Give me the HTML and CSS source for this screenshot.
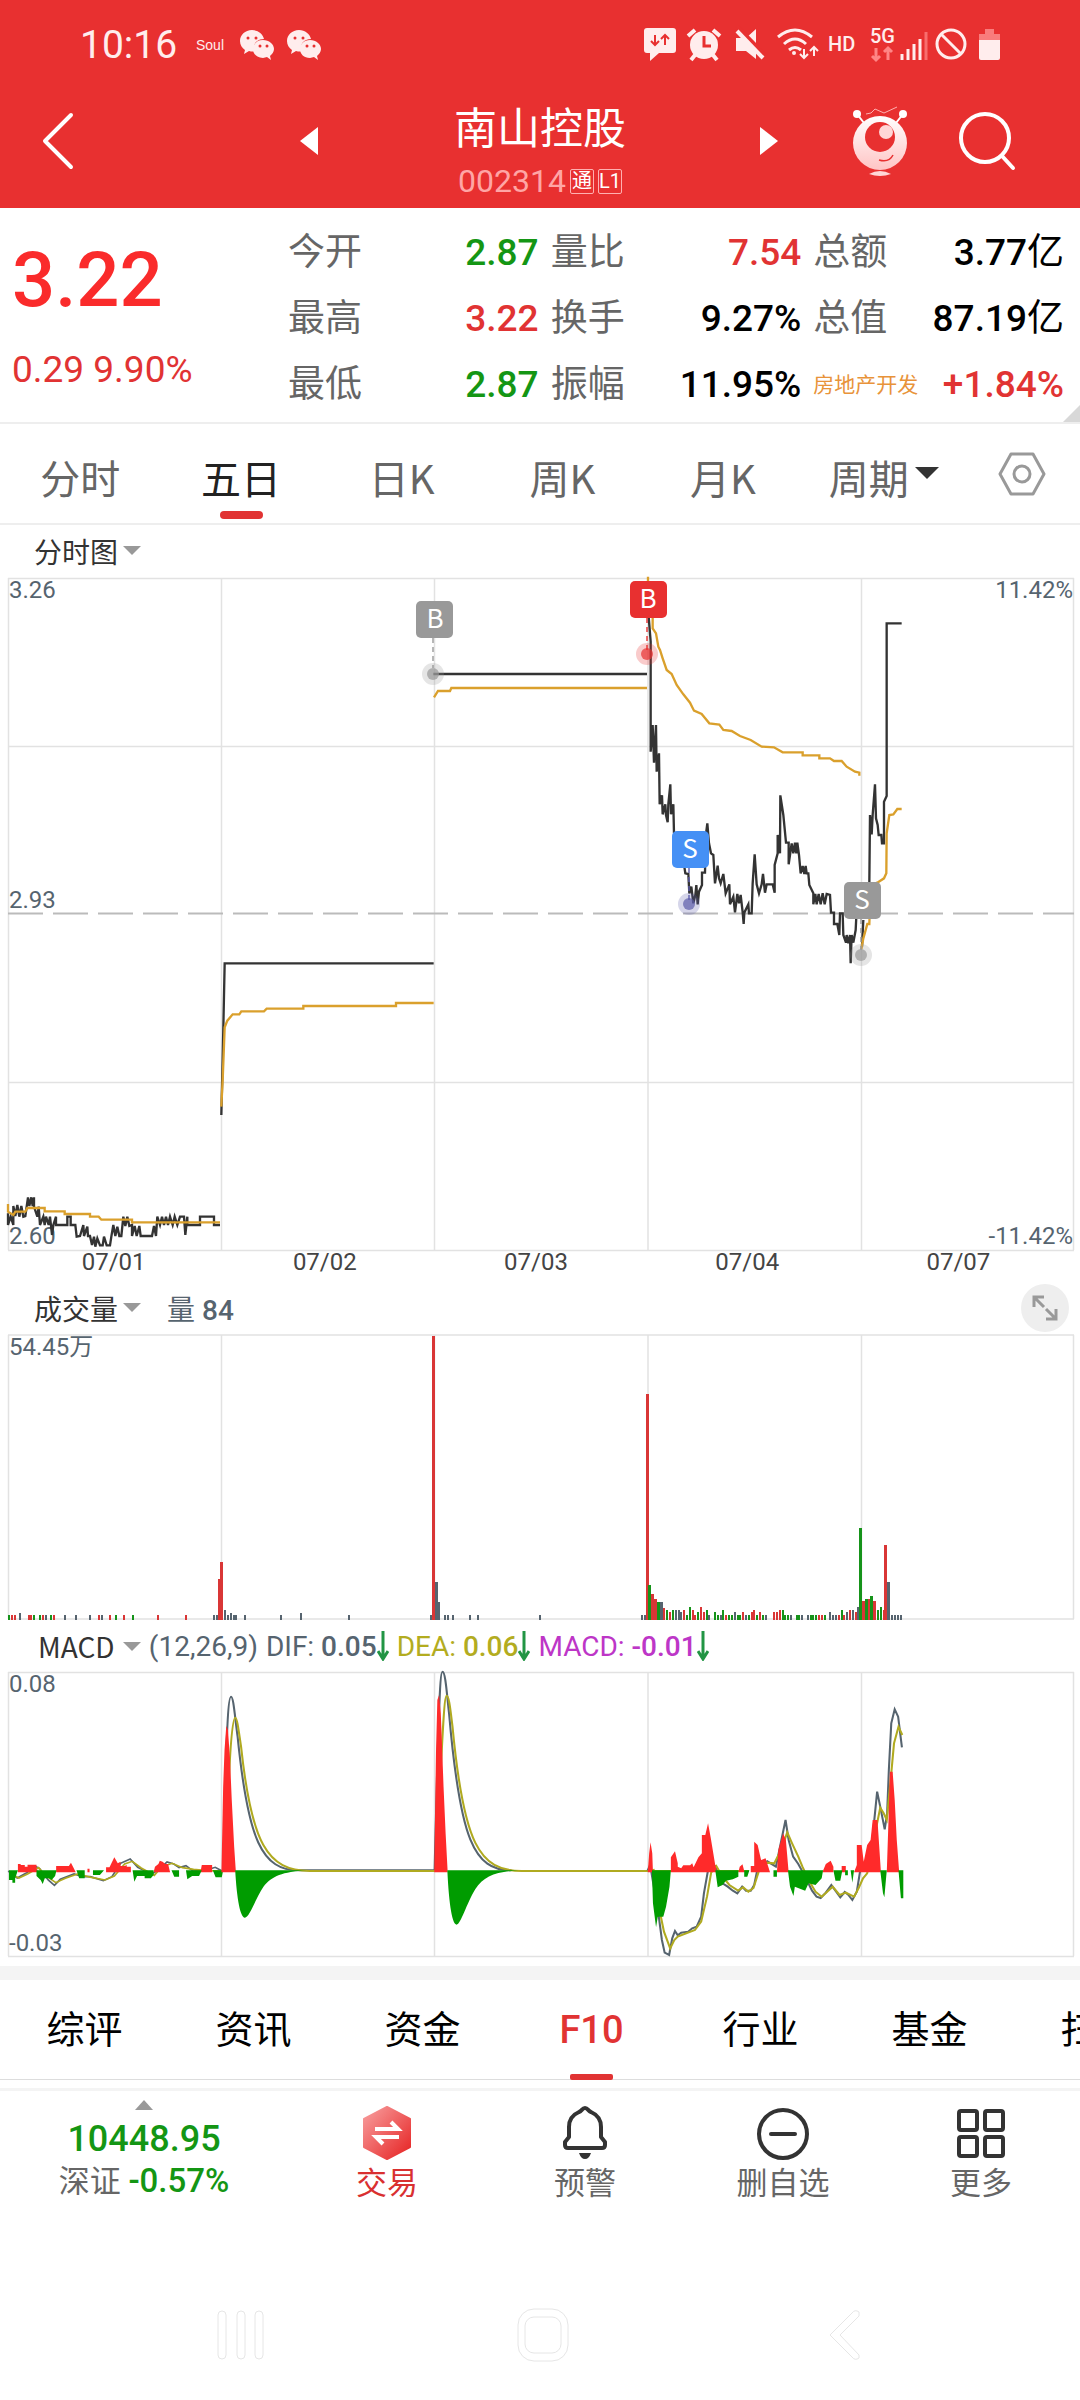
FILE: index.html
```html
<!DOCTYPE html>
<html lang="zh">
<head>
    <meta charset="UTF-8">
    <meta name="viewport" content="width=device-width, initial-scale=1.0">
    <title>南山控股 002314</title>
    <link rel="stylesheet" href="styles.css">
</head>
<body>
    <header class="header">
        <!-- 状态栏 -->
        <div class="status">
            <span class="time">10:16</span>
            <span class="soul">Soul</span>
            <svg class="wechat" viewBox="0 0 34 30"><use href="#wechat"/></svg>
            <svg class="wechat" viewBox="0 0 34 30"><use href="#wechat"/></svg>
            <svg class="status-icons" viewBox="640 24 364 42" fill="#ffeded">
                <path d="M647 28h26q3 0 3 3v19q0 3-3 3h-14l-9 8v-8h-3q-3 0-3-3V31q0-3 3-3z"/>
                <path d="M655 35v10m-4-4l4 4 4-4M665 45V35m-4 4l4-4 4 4" fill="none" stroke="#e83030" stroke-width="2"/>
                <circle cx="704" cy="45" r="14"/>
                <path d="M688 36l7-6M720 36l-7-6M695 55l-4 5M713 55l4 5" stroke="#ffeded" stroke-width="4"/>
                <path d="M704 36v10h7" fill="none" stroke="#e83030" stroke-width="3"/>
                <path d="M736 38h10l10-9v30l-10-8h-10z"/>
                <path d="M737 27l29 30" stroke="#e83030" stroke-width="5"/>
                <path d="M737 31l26 27" stroke="#ffeded" stroke-width="4"/>
                <path d="M778 37q17-14 34 0M784 44q11-10 22 0M789 50q6-5 12 0" fill="none" stroke="#ffeded" stroke-width="3"/>
                <circle cx="794" cy="53" r="2"/>
                <path d="M804 49v9m-4-4l4 4 4-4M814 56v-9m-4 4l4-4 4 4" fill="none" stroke="#ffeded" stroke-width="2"/>
                <text x="828" y="51" class="st-text">HD</text>
                <text x="870" y="43" class="st-text">5G</text>
                <path d="M876 48v12m-4-4l4 4 4-4M888 60V48m-4 4l4-4 4 4" fill="none" stroke="#ff8585" stroke-width="3"/>
                <path d="M902 60v-6M908 60V49M914 60V44M920 60V39" stroke="#ffeded" stroke-width="3"/>
                <path d="M926 60V32" stroke="#f86e6e" stroke-width="3"/>
                <circle cx="951" cy="44" r="14" fill="none" stroke="#ffeded" stroke-width="3"/>
                <path d="M941 34l20 20" stroke="#ffeded" stroke-width="3"/>
                <path d="M979 34h6v-5h9v5h6v8h-21z" fill="#f97c7c"/>
                <path d="M979 40h21v18q0 2-2 2h-17q-2 0-2-2z"/>
            </svg>
        </div>
        <!-- 标题栏 -->
        <nav class="nav">
            <div class="nav-side nav-left">
                <button type="button" aria-label="返回"><svg width="32" height="58" viewBox="0 0 32 58"><path d="M29 3L3 29l26 26" class="stroke-white"/></svg></button>
                <button type="button" aria-label="上一只"><svg width="18" height="28" viewBox="0 0 18 28"><path d="M18 0v28L0 14z" fill="#fff"/></svg></button>
            </div>
            <div class="nav-title">
                <h1>南山控股</h1>
                <p>002314 <span class="badge">通</span><span class="badge">L1</span></p>
            </div>
            <div class="nav-side nav-right">
                <button type="button" aria-label="下一只"><svg width="18" height="28" viewBox="0 0 18 28"><path d="M0 0v28l18-14z" fill="#fff"/></svg></button>
                <button type="button" class="robot" aria-label="助手">
                    <svg width="56" height="70" viewBox="0 0 56 70">
                        <defs><linearGradient id="rb" x1="0" y1="0" x2="0" y2="1"><stop offset="0" stop-color="#fff"/><stop offset="1" stop-color="#ffc4c4"/></linearGradient></defs>
                        <path d="M5 8l7 9M51 8l-7 9" stroke="#fff" stroke-width="2"/>
                        <circle cx="5" cy="8" r="4" fill="#fff"/><circle cx="51" cy="8" r="4" fill="#fff"/>
                        <path d="M14 8l5-1 4-4 9 4 13-6" fill="none" stroke="#ffb0b0" stroke-width="1"/>
                        <circle cx="28" cy="37" r="27" fill="url(#rb)"/>
                        <circle cx="28" cy="31" r="15" fill="#e83030"/>
                        <circle cx="34" cy="26" r="7" fill="#ffd6d6"/>
                        <path d="M27 54q10 3 14-5" fill="none" stroke="#e83030" stroke-width="1.5"/>
                        <path d="M17 68q11-6 22 0q-11 4-22 0" fill="#ffd6d6"/>
                    </svg>
                </button>
                <button type="button" class="search" aria-label="搜索"><svg width="58" height="60" viewBox="0 0 58 60"><circle cx="27" cy="27" r="24" class="stroke-white"/><path d="M44 45l11 12" class="stroke-white"/></svg></button>
            </div>
        </nav>
    </header>

    <!-- 行情 -->
    <section class="quote">
        <div class="price red">
            <strong>3.22</strong>
            <span>0.29 9.90%</span>
        </div>
        <dl>
            <div><dt>今开</dt><dd class="green">2.87</dd></div>
            <div><dt>最高</dt><dd class="red">3.22</dd></div>
            <div><dt>最低</dt><dd class="green">2.87</dd></div>
        </dl>
        <dl>
            <div><dt>量比</dt><dd class="red">7.54</dd></div>
            <div><dt>换手</dt><dd>9.27%</dd></div>
            <div><dt>振幅</dt><dd>11.95%</dd></div>
        </dl>
        <dl>
            <div><dt>总额</dt><dd>3.77<span>亿</span></dd></div>
            <div><dt>总值</dt><dd>87.19<span>亿</span></dd></div>
            <div><dt class="sector">房地产开发</dt><dd class="red">+1.84%</dd></div>
        </dl>
        <i class="corner"></i>
    </section>

    <nav class="tabs">
        <button type="button">分时</button>
        <button type="button" class="active">五日</button>
        <button type="button">日K</button>
        <button type="button">周K</button>
        <button type="button">月K</button>
        <button type="button">周期<i class="caret"></i></button>
        <button type="button" class="setting" aria-label="设置"><svg width="48" height="44" viewBox="0 0 48 44" fill="none" stroke="#999" stroke-width="3"><path d="M13 2h22l11 20-11 20H13L2 22z" stroke-linejoin="round"/><circle cx="24" cy="22" r="8"/></svg></button>
    </nav>

    <!-- 分时图 -->
    <div class="chart-head"><button type="button" class="pick">分时图<i></i></button></div>
    <svg class="chart" viewBox="0 576 1080 676">
        <path class="grid" d="M8 578.500H1074M8 746.500H1074M8 1082.500H1074M8 1250.500H1074M8.500 578V1250M221.500 578V1250M434.500 578V1250M648 578V1250M861.500 578V1250M1073.500 578V1250"/>
        <path d="M8 913.500H1074" stroke="#bbb" stroke-width="2" stroke-dasharray="35 10"/>
        <text x="9" y="598">3.26</text>
        <text x="9" y="908">2.93</text>
        <text x="9" y="1244">2.60</text>
        <text x="1073" y="598" text-anchor="end">11.42%</text>
        <text x="1073" y="1244" text-anchor="end">-11.42%</text>
        <g transform="translate(0 900) scale(.33333)" class="line">
            <path class="now" d="M24 940V975L32 950 40 975V918L46 948 52 915 58 950 64 918 70 950 76 948 84 892 88 918 94 892 98 918 102 892V920L112 950 116 920 120 975 130 950 134 975 138 950 146 975 150 950 156 1005 160 975 168 950V975H202V950H212V975H226L230 1010 240 1008 250 975 252 1008 262 980 264 1008H270L276 1035 282 1010 286 1040 292 1015 300 1036 308 1036 312 1010 320 1036H330L334 1010 340 975 346 1008 352 980 358 1008 364 1008 370 950 376 978 382 950 388 978 396 975V1008L404 978 410 1008 418 978 422 1008H456L462 978 468 1008 472 950 480 975 486 950 492 975 498 950 504 975 510 950 518 975 524 950 532 975 540 950 552 950 556 1005 562 950V975H600V950H642V975H660M664 645L668 480 674 190H1301"/>
            <path class="avg" d="M24 912V935L40 945 46 935H76L82 924H134V934H194V942H270V950H296L304 959H396V967H660M664 620L668 540 674 382 682 362 698 343H718L724 334H792L800 326H910V318H1188V309H1301"/>
        </g>
        <g transform="translate(400 570) scale(.33333)" class="line">
            <path class="now" d="M100 312H741M746 140L752 215 752 545 758 465 762 578 768 465 770 605 777 550 779 703 786 676 788 733 796 703 798 735 803 757 805 703 811 643 813 733 820 703 822 790M853 890L856 910 865 912 868 970 874 950 880 1000 886 975 889 945 893 1003 897 965 906 945V908H915L917 800 922 760 927 820 933 850 940 855 945 940 953 887 957 925 962 940 970 912 977 970 988 943 990 1003 1000 980 1005 1027 1012 972 1017 1000 1022 975 1028 1027 1031 1062 1033 1028 1045 1003 1047 1030H1055L1058 940 1064 853 1070 943 1077 970 1085 943 1089 912 1095 968 1100 943H1118L1124 968V885L1133 850V795L1140 850 1141 676 1150 735 1158 818H1166V883L1175 820 1180 850 1185 818 1189 850 1192 818 1197 855 1202 910 1208 888 1213 912 1217 888 1220 910H1225L1228 945 1240 970V1003L1246 972 1250 1003 1256 972 1262 1003 1268 970 1274 1003 1280 972 1290 975 1293 1028H1302V1062H1312L1318 1095 1320 1030H1328L1330 1095 1338 1118 1340 1095 1345 1120 1350 1095 1352 1180 1355 1095 1360 1118 1367 1080 1369 1040M1386 1130L1390 1050M1408 940L1410 735 1415 793 1418 735 1425 643 1428 745 1433 765 1436 795H1444L1446 820H1452V695L1460 678V160H1505"/>
            <path class="avg" d="M102 382L114 363H150L154 354H741M744 20V40M758 140V175L768 190 775 230 780 240 788 265 800 300 815 312 830 345 850 373 870 398 882 422 905 432 928 460 958 464 970 480 995 483 1020 498 1052 510 1085 530 1122 532 1148 547H1208V556H1258V565H1290L1302 573H1325L1340 590 1365 605 1378 608V617M1384 1138L1390 1105 1402 1062 1408 1062 1412 945 1432 938 1452 925 1459 910 1460 790 1468 735 1480 733 1492 717H1505"/>
        </g>
        <!-- 买卖点 -->
        <g class="mark" fill="#999" stroke="#999"><path d="M433 638V668"/><circle cx="433" cy="674" r="11" class="halo"/><circle cx="433" cy="674" r="6"/><rect x="416" y="601" width="37" height="37" rx="5"/><text x="435" y="628">B</text></g>
        <g class="mark" fill="#e83030" stroke="#e83030"><path d="M647 618V650"/><circle cx="647" cy="654" r="11" class="halo"/><circle cx="647" cy="654" r="6"/><rect x="630" y="581" width="37" height="37" rx="5"/><text x="648" y="608">B</text></g>
        <g class="mark" fill="#5c5caa" stroke="#5c5caa"><path d="M689 868V900"/><circle cx="689" cy="904" r="11" class="halo"/><circle cx="689" cy="904" r="6"/><rect x="672" y="831" width="37" height="37" rx="5" fill="#4590f5"/><text x="690" y="858">S</text></g>
        <g class="mark" fill="#999" stroke="#999"><path d="M861 919V950"/><circle cx="861" cy="955" r="11" class="halo"/><circle cx="861" cy="955" r="6"/><rect x="844" y="882" width="37" height="37" rx="5"/><text x="862" y="909">S</text></g>
    </svg>
    <div class="dates"><span>07/01</span><span>07/02</span><span>07/03</span><span>07/04</span><span>07/07</span></div>

    <!-- 成交量 -->
    <div class="chart-head">
        <button type="button" class="pick">成交量<i></i></button>
        <span class="vol">量 <b>84</b></span>
        <button type="button" class="expand" aria-label="放大"><svg width="26" height="26" viewBox="0 0 26 26" fill="none" stroke="#999" stroke-width="3"><path d="M2 12V2h10M2 2l10 10M24 14v10H14M24 24L14 14"/></svg></button>
    </div>
    <svg class="chart" viewBox="0 1333 1080 288">
        <path class="grid" d="M8 1335H1074M8 1619H1074M8.500 1335V1619M221.500 1335V1619M434.500 1335V1619M648 1335V1619M861.500 1335V1619M1073.500 1335V1619"/>
        <text x="9" y="1355">54.45万</text>
        <g id="bars"></g>
    </svg>

    <!-- MACD -->
    <div class="chart-head macd-head">
        <button type="button" class="pick">MACD <i></i></button>
        <span class="dif">(12,26,9)</span>
        <span class="dif">DIF: <b>0.05</b><svg class="down" viewBox="0 0 12 30"><path d="M6 0v28M1 20l5 8 5-8"/></svg></span>
        <span class="dea">DEA: <b>0.06</b><svg class="down" viewBox="0 0 12 30"><path d="M6 0v28M1 20l5 8 5-8"/></svg></span>
        <span class="macd">MACD: <b>-0.01</b><svg class="down" viewBox="0 0 12 30"><path d="M6 0v28M1 20l5 8 5-8"/></svg></span>
    </div>
    <svg class="chart" viewBox="0 1671 1080 287">
        <path class="grid" d="M8 1672.500H1074M8 1956.500H1074M8.500 1672V1956M221.500 1672V1956M434.500 1672V1956M648 1672V1956M861.500 1672V1956M1073.500 1672V1956"/>
        <text x="9" y="1692">0.08</text>
        <text x="9" y="1951">-0.03</text>
        <g transform="translate(0 1600) scale(.34437 .33333)">
            <path class="l-dif thin" d="M24 813L50 834 75 820 105 800 115 806 140 840 158 856 175 838 215 822 240 830 262 830 300 842 325 830 350 790 378 777 400 802 440 822 460 810 485 786 505 792 520 803 540 797 560 813 600 810 625 802 645 813"/>
            <path class="l-dea thin" d="M28 820L55 834 80 822 112 803 130 825 162 848 190 835 225 822 265 832 305 840 332 828 362 792 384 784 410 804 448 826 470 800 500 790 530 803 562 808 600 812 645 813"/>
            <path class="up" d="M52 817V792H60V795H72V800H80V794H106V806L112 817ZM163 817V798H200L206 788 212 800 220 817ZM254 817V806H260V817ZM308 817V802H318L332 772 342 790 350 785V798H362L368 795V800H380V817ZM446 817L450 800 460 792 464 782 472 785 480 792H488L494 817ZM582 817L586 795H616V817Z"/>
            <path class="dn" d="M26 811V840H36V848H44V835L52 811ZM106 811V828L118 840 124 852 130 835H142L150 840 160 828 164 811ZM222 811L230 835H246V811ZM270 811V825H290L302 811ZM385 811L390 845 398 828H420V835H438L446 825V811ZM498 811L506 830H520V811ZM540 811L544 838 558 828H578L586 811ZM618 811L626 832H644L648 811Z"/>
            <path class="l-dif" d="M656 500C660 360 664 290 671 290S682 350 690 410C720 720 760 813 870 811H1262C1272 400 1276 215 1285 215S1298 290 1304 340C1336 720 1376 811 1485 811"/>
            <path class="l-dea" d="M664 560C670 400 677 353 683 353S694 400 700 440C730 730 776 813 900 813H1266C1284 400 1290 287 1297 287S1308 330 1314 380C1346 730 1391 813 1515 813H2175"/>
            <path class="up" d="M643 817L648 560 652 450 657 378 662 390 668 480 673 600 680 740 685 817ZM1261 817L1266 460 1270 300 1275 285 1280 340 1288 560 1294 700 1300 817Z"/>
            <path class="dn" d="M683 811C688 900 698 953 711 953S740 900 765 860C790 828 820 816 890 811ZM1299 811C1304 920 1314 974 1326 974S1355 910 1380 868C1405 828 1440 816 1505 811Z"/>
        </g>
        <g transform="translate(540 1620) scale(.34437 .33333)">
            <path class="l-dif" d="M312 753L320 735 345 890 354 960 362 998 375 1005 384 955 392 933 400 946 410 938 430 935 442 925 455 920 468 890 476 820 487 756 495 730 508 738 530 790 545 800 560 812 573 820 587 800 598 812 612 812 622 795 632 745 645 735 660 724 685 740 700 665 713 600 722 660 735 710 750 732 765 760 790 812 803 830 815 834 830 818 846 795 860 815 872 832 885 816 895 824 907 840 920 815 930 750 950 745 962 690 979 515 988 560 1001 628 1008 580 1013 450 1020 310 1030 268 1040 290 1051 382"/>
            <path class="l-dea" d="M312 753L330 750 350 885 360 935 378 985 390 960 400 950 450 930 468 905 485 830 497 758 512 738 530 770 550 795 575 812 590 802 605 815 620 804 635 755 655 728 680 730 700 690 718 637 732 670 750 710 762 740 780 780 800 815 818 830 850 800 870 825 888 818 912 830 925 805 938 775 950 760 965 700 975 630 988 563 998 580 1007 600 1020 460 1028 370 1041 320 1052 345"/>
            <path class="up" d="M313 757L317 700 321 667 326 700 328 757ZM380 757V712L392 694 400 730V740L410 745 416 736H436L442 730 446 742 460 712 470 700V645H480L488 610 496 655 508 730 514 757ZM576 757L580 740 588 733 594 757ZM612 757V738H622V665L632 675 642 720 655 715 668 757ZM688 757L692 690 706 640 714 660 722 757ZM820 757L830 732 844 722 852 740V757ZM876 757V738H888V757ZM912 757L920 735V675H934L940 725 950 675 960 660 966 600H980L990 757ZM1007 757L1012 600 1016 455H1024L1030 540 1036 660 1043 757Z"/>
            <path class="dn" d="M325 751L328 850 337 922 342 890 358 890 366 860 376 800 380 751ZM509 751L516 802 530 795 540 782 560 778 576 770V751ZM593 751V770H602L608 751ZM678 751V770H688V751ZM720 751L726 800 736 828 740 800 770 812 780 790 800 795 818 775 822 751ZM852 751L858 782H872L878 751ZM886 751V766H894V751ZM902 751L907 788 912 751ZM988 751L996 820 1000 832 1007 751ZM1041 751L1048 835H1055V751Z"/>
        </g>
    </svg>

    <nav class="info-tabs">
        <a href="#">综评</a>
        <a href="#">资讯</a>
        <a href="#">资金</a>
        <a href="#" class="active">F10</a>
        <a href="#">行业</a>
        <a href="#">基金</a>
        <a href="#">扫雷</a>
    </nav>

    <!-- 底部工具栏 -->
    <footer class="toolbar">
        <button type="button" class="index">
            <i></i>
            <strong>10448.95</strong>
            <span>深证 <b>-0.57%</b></span>
        </button>
        <button type="button" class="trade">
            <svg viewBox="0 0 54 54"><defs><linearGradient id="tr" x1="0" y1="0" x2="1" y2="1"><stop offset="0" stop-color="#f8a0a0"/><stop offset="1" stop-color="#e62222"/></linearGradient></defs><path d="M27 1L50 13V41L27 53 4 41V13z" fill="url(#tr)" stroke="url(#tr)" stroke-width="2" stroke-linejoin="round"/><path d="M15 23H38L31 16M39 31H16L23 38" fill="none" stroke="#fff" stroke-width="4"/></svg>
            交易
        </button>
        <button type="button">
            <svg viewBox="0 0 54 54" fill="none" stroke="#333" stroke-width="4" stroke-linejoin="round"><path d="M27 2C24 2 24 5 21 6C14 9 11 14 11 21V31L7 36V39Q7 42 10 42H44Q47 42 47 39V36L43 31V21C43 14 40 9 33 6C30 5 30 2 27 2z"/><path d="M21 47H33Q31 53 27 53T21 47z" fill="#333" stroke="none"/></svg>
            预警
        </button>
        <button type="button">
            <svg viewBox="0 0 54 54" fill="none" stroke="#333" stroke-width="4"><circle cx="27" cy="28" r="24"/><path d="M15 28H39" stroke-linecap="round"/></svg>
            删自选
        </button>
        <button type="button">
            <svg viewBox="0 0 54 54" fill="none" stroke="#333" stroke-width="4"><rect x="5" y="5" width="18" height="19" rx="2"/><rect x="31" y="5" width="18" height="19" rx="2"/><rect x="5" y="31" width="18" height="19" rx="2"/><rect x="31" y="31" width="18" height="19" rx="2"/></svg>
            更多
        </button>
    </footer>

    <div class="system-bar">
        <svg viewBox="0 0 1080 56" fill="none" stroke="#e6e6e6" stroke-width="1">
            <rect x="218" y="4" width="8" height="48" rx="4"/><rect x="237" y="4" width="8" height="48" rx="4"/><rect x="255" y="4" width="8" height="48" rx="4"/>
            <rect x="518" y="2" width="50" height="52" rx="16"/><rect x="525" y="10" width="36" height="36" rx="9"/>
            <path d="M859 5Q855 2 852 6L830 28 852 50Q855 54 859 51V48L840 28 859 9z"/>
        </svg>
    </div>

    <svg class="defs">
        <symbol id="wechat" viewBox="0 0 34 30">
            <path d="M12 0C5 0 0 5 0 11c0 4 2 7 5 9l-1 4 5-3q4 1 6 0C12 14 17 9 24 9C23 4 18 0 12 0z" fill="#ffeded"/>
            <path d="M23 10c-6 0-10 4-10 9s4 9 10 9l4-1 4 3-1-4c2-2 4-4 4-7 0-5-5-9-11-9z" fill="#ffeded"/>
            <g fill="#e83030"><circle cx="8" cy="8" r="1.500"/><circle cx="16" cy="8" r="1.500"/><circle cx="20" cy="16" r="1.500"/><circle cx="27" cy="16" r="1.500"/></g>
        </symbol>
    </svg>

    <script>
        // 每段: 起点x + 柱子(颜色+高度), _ 为空
        const volume = [
            [9, "g5 r5 r5 _ k7 _ _ r5 r5 g5 _ g5 r5 k5 _ g5 r5 _ _ _ k5 _ _ _ k5 _ _ _ _ k5 _ _ r5 k5 _ _ r5 _ g5 _ _ r5 _ _ g5"],
            [158, "r5"], [186, "r5"],
            [214, "k5 k5 r41 r58 k10 k5 k7 k5 k5 _ _ k5"],
            [281, "k5"], [301, "k7"], [349, "k5"],
            [431, "k5 r284 k38 k18 _ k5 k5 _ k5"],
            [470, "k5"], [478, "k5"], [540, "k5"],
            [642, "k5 k5 r226 g35 r26 r21 g18 k18 r12 g10 r8 g10 k10 k10 k8 r10 g5 g13 r10 r5 g8 r13 r8 g10 k5 _ g8 g5 k5 g10 r5 g5 g5 k8 g5 g5 r8 k5 g5 r8 r10 g5 r8 g5 k5 _ _ r8 r8 r10 g10 g5 g5 k5 _ g5 g5 k5 _ k5 g5 g5 g5 r5 r5 g5 _ k8 k5 k5 r5 g10 r5 k8 r10 k10 r8 k13 g92 r19 g21 r21 g24 r19 g10 g13 r10 r75 k38 k5 k5 k5 k5"]
        ];
        const colors = { r: "#d93636", g: "#16931a", k: "#56646f" };
        let html = "";
        volume.forEach(([x, bars]) => {
            bars.split(" ").forEach((bar, i) => {
                if (bar === "_") return;
                const h = Number(bar.slice(1));
                // 高柱稍宽
                const w = h > 15 ? 3 : 2;
                html += `<rect x="${Math.round(x + i * 2.81) - w + 1}" y="${1620 - h}" width="${w}" height="${h}" fill="${colors[bar[0]]}"/>`;
            });
        });
        document.getElementById("bars").innerHTML = html;
    </script>
</body>
</html>
```
FILE: styles.css
```css
* {
    box-sizing: border-box;
}
body {
    margin: 0;
    font-family: Roboto, "Noto Sans CJK SC", sans-serif;
    background-color: #fff;
    color: #333;
    overflow-x: hidden;
}
h1, p, dl, dd {
    margin: 0;
}
button {
    padding: 0;
    border: 0;
    background: none;
    font: inherit;
    color: inherit;
}
svg {
    display: block;
}
.red {
    color: #e13333;
}
.green {
    color: #149614;
}
.defs {
    display: none;
}

/* 顶部 */
.header {
    background-color: #e83030;
    color: #fff;
}
.status {
    display: flex;
    align-items: center;
    height: 90px;
    padding: 0 76px 0 80px;
    color: #ffeded;
}
.time {
    font-size: 39px;
    width: 116px;
}
.soul {
    font-family: "Liberation Sans Narrow", "Liberation Sans", sans-serif;
    font-size: 14px;
    width: 44px;
}
.wechat {
    width: 34px;
    height: 30px;
    margin-right: 13px;
}
.status-icons {
    width: 364px;
    height: 42px;
    margin-left: auto;
}
.st-text {
    font-size: 20px;
    font-weight: 500;
}
.nav {
    display: grid;
    grid-template-columns: 1fr 172px 1fr;
    padding-top: 12px;
    height: 118px;
}
.nav-side {
    display: flex;
    align-items: center;
    height: 78px;
}
.nav-left {
    justify-content: space-between;
    padding: 0 136px 0 42px;
}
.nav-right {
    padding-left: 134px;
}
.robot {
    margin-left: 74px;
}
.search {
    margin-left: 50px;
}
.stroke-white {
    fill: none;
    stroke: #fff;
    stroke-width: 4;
    stroke-linecap: round;
    stroke-linejoin: round;
}
.nav-title h1 {
    font-size: 43px;
    font-weight: 400;
    line-height: 54px;
    text-align: center;
    white-space: nowrap;
}
.nav-title p {
    display: flex;
    align-items: center;
    justify-content: center;
    gap: 4px;
    font-size: 32px;
    line-height: 50px;
    color: #ffa5a5;
}
.badge {
    width: 24px;
    height: 25px;
    border: 1px solid #ffb0b0;
    border-radius: 2px;
    color: #fff;
    font-size: 20px;
    line-height: 23px;
    text-align: center;
}

/* 行情 */
.quote {
    position: relative;
    display: grid;
    grid-template-columns: 264px 1fr 1fr 1fr;
    gap: 12px;
    height: 216px;
    padding: 12px 16px 0 12px;
    border-bottom: 2px solid #eee;
    font-weight: 500;
}
.price strong {
    display: block;
    font-size: 76px;
    font-weight: 500;
    line-height: 120px;
    color: #fa2b2b;
}
.price span {
    font-size: 37px;
    line-height: 60px;
    font-weight: 400;
}
.quote dl div {
    display: flex;
    justify-content: space-between;
    font-size: 37px;
    line-height: 66px;
    white-space: nowrap;
}
.quote dt {
    font-weight: 400;
    color: #666;
}
.quote dd span {
    font-weight: 400;
}
.quote dd:not(.red):not(.green) {
    color: #000;
}
.quote .sector {
    font-size: 21px;
    color: #e8933a;
}
.corner {
    position: absolute;
    right: 0;
    bottom: 0;
    border-left: 17px solid transparent;
    border-bottom: 17px solid #d8d8d8;
}

/* 周期 */
.tabs {
    display: flex;
    height: 101px;
    padding-top: 23px;
    border-bottom: 2px solid #eee;
    font-family: "Noto Sans CJK SC", sans-serif;
}
.tabs button {
    display: flex;
    justify-content: center;
    align-items: center;
    position: relative;
    flex: 1;
    height: 60px;
    font-size: 40px;
    line-height: 60px;
    color: #666;
}
.tabs .active {
    color: #222;
}
.tabs .active::after {
    content: "";
    position: absolute;
    top: 64px;
    width: 43px;
    height: 8px;
    border-radius: 4px;
    background-color: #e13333;
}
.tabs .caret {
    margin: 0 0 8px 6px;
    border: 12px solid transparent;
    border-top-color: #333;
    border-bottom: 0;
}
.tabs .setting {
    flex: 0 0 116px;
    height: 54px;
}

/* 图表 */
.chart-head {
    display: flex;
    align-items: center;
    height: 51px;
    padding: 0 11px 0 34px;
    font-size: 28px;
    color: #56646f;
}
.chart-head b {
    font-weight: 500;
}
.pick {
    display: flex;
    align-items: center;
    color: #333;
    font-family: "Noto Sans CJK SC", sans-serif;
    line-height: 36px;
    white-space: pre;
}
.pick i {
    margin-left: 5px;
    border: 9px solid transparent;
    border-top-color: #999;
    border-bottom: 0;
}
.vol {
    margin-left: 26px;
}
.expand {
    display: flex;
    align-items: center;
    justify-content: center;
    width: 48px;
    height: 48px;
    margin-left: auto;
    border-radius: 50%;
    background-color: #eee;
}
.macd-head {
    height: 50px;
    padding-left: 38px;
    gap: 8px;
    white-space: pre;
}
.macd-head span {
    display: flex;
    align-items: center;
}
.macd-head .pick i {
    margin-left: 2px;
}
.dea {
    color: #b3ac1f;
}
.macd {
    color: #bd36c7;
}
.down {
    width: 12px;
    height: 30px;
    fill: none;
    stroke: #229544;
    stroke-width: 3;
}
.chart {
    width: 100%;
    height: auto;
    overflow: visible;
}
.chart text {
    font-size: 24px;
    fill: #56646f;
}
.grid {
    stroke: #e2e2e2;
    stroke-width: 1.5;
}
.line path {
    fill: none;
    stroke-width: 7;
}
.line .now {
    stroke: #333;
}
.line .avg {
    stroke: #daa02c;
}
.mark path {
    stroke-width: 2;
    stroke-dasharray: 5 4;
    opacity: .7;
}
.mark circle, .mark rect {
    stroke: none;
}
.mark circle {
    opacity: .7;
}
.mark .halo {
    opacity: .25;
}
.chart .mark text {
    font-family: "Noto Sans CJK SC", sans-serif;
    font-size: 26px;
    fill: #fff;
    stroke: none;
    text-anchor: middle;
}
.up {
    fill: #ff2a2a;
}
.dn {
    fill: #009c00;
}
.l-dif, .l-dea {
    fill: none;
    stroke: #56646f;
    stroke-width: 6;
}
.l-dea {
    stroke: #b0aa20;
}
.thin {
    stroke-width: 5;
}
.dates {
    display: flex;
    height: 30px;
    padding: 0 16px 0 8px;
    font-size: 24px;
    line-height: 20px;
    color: #444;
}
.dates span {
    flex: 1;
    text-align: center;
}

/* 资讯标签 */
.info-tabs {
    display: flex;
    height: 122px;
    margin-top: 8px;
    border-top: 14px solid #f4f4f4;
    border-bottom: 8px solid #fff;
    box-shadow: inset 0 -1px #ddd, 0 3px #f4f4f4;
    overflow: hidden;
    font-size: 38px;
    line-height: 100px;
}
.info-tabs a {
    position: relative;
    flex: 0 0 169px;
    color: #000;
    text-align: center;
    text-decoration: none;
}
.info-tabs .active {
    color: #e13333;
    font-weight: 500;
}
.info-tabs .active::after {
    content: "";
    position: absolute;
    left: 63px;
    bottom: 0;
    width: 43px;
    height: 6px;
    border-radius: 2px;
    background-color: #e13333;
}

/* 底部 */
.toolbar {
    display: grid;
    grid-template-columns: 288px 1fr 1fr 1fr 1fr;
    height: 116px;
    margin-top: 3px;
}
.toolbar button {
    display: flex;
    flex-direction: column;
    align-items: center;
    padding-top: 15px;
    font-size: 31px;
    line-height: 48px;
    color: #666;
}
.toolbar svg {
    width: 54px;
    height: 54px;
}
.toolbar .trade {
    color: #d93030;
}
.toolbar .index {
    padding-top: 9px;
}
.index i {
    border: 9px solid transparent;
    border-bottom: 10px solid #999;
    border-top: 0;
}
.index strong, .index b {
    color: #149614;
    font-weight: 500;
}
.index strong {
    font-size: 36px;
    line-height: 58px;
}
.index span {
    line-height: 26px;
}
.index b {
    font-size: 33px;
}
.system-bar {
    padding: 100px 0 36px;
}
.system-bar svg {
    width: 100%;
    height: auto;
}
```
